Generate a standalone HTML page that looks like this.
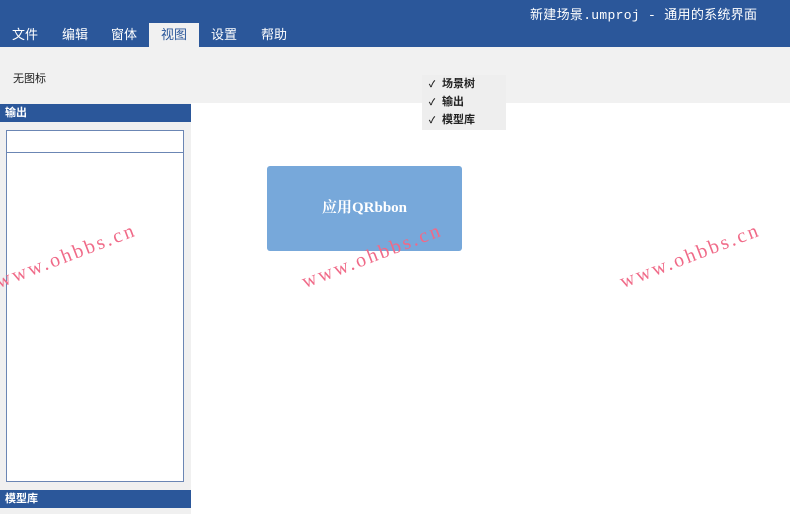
<!DOCTYPE html>
<html><head><meta charset="utf-8"><style>
*{margin:0;padding:0;box-sizing:border-box}
body{width:790px;height:514px;overflow:hidden;background:#fff;font-family:"Liberation Sans","Noto Sans CJK SC",sans-serif;position:relative}
.top{position:absolute;left:0;top:0;width:790px;height:47px;background:#2b579a}
.title{position:absolute;left:530px;top:4px;color:#fff;font-size:13px;letter-spacing:0.3px;font-family:"Liberation Mono","Noto Sans CJK SC",monospace}
.tab{position:absolute;top:23px;height:24px;line-height:24px;color:#fff;font-size:13px;width:50px;text-align:center}
.tab.act{background:#f1f1f1;color:#2b579a}
.ribbon{position:absolute;left:0;top:47px;width:790px;height:56px;background:#f1f1f1}
.left{position:absolute;left:0;top:103px;width:191px;height:411px;background:#f0f0f0}
.hdr{position:absolute;left:0;width:191px;height:18px;background:#2b579a;color:#fff;font-size:11px;font-weight:bold;line-height:18px;padding-left:5px}
.box{position:absolute;background:#fff;border:1px solid #6b86b4}
.menu{position:absolute;left:422px;top:75px;width:84px;height:55px;background:#eeeeee;font-size:11px;color:#222;font-weight:bold}
.menu div{height:18px;line-height:18px}
.menu span{display:inline-block;width:20px;text-align:center;font-size:9px}
.btn{position:absolute;left:267px;top:166px;width:195px;height:85px;background:#77a8da;border-radius:3px;color:#fff;font-size:15px;font-weight:bold;text-align:center;line-height:85px;font-family:"Liberation Serif","Noto Serif CJK SC",serif}
.wm{position:absolute;color:#f06a88;font-size:20px;font-family:"Liberation Serif",serif;transform:rotate(-21deg);letter-spacing:2.5px}
</style></head><body>
<div class="top"></div>
<div class="title">新建场景.umproj - 通用的系统界面</div>
<div class="tab" style="left:0">文件</div>
<div class="tab" style="left:50px">编辑</div>
<div class="tab" style="left:99px">窗体</div>
<div class="tab act" style="left:149px">视图</div>
<div class="tab" style="left:199px">设置</div>
<div class="tab" style="left:249px">帮助</div>
<div class="ribbon"><div style="position:absolute;left:13px;top:23px;font-size:11px;color:#222">无图标</div></div>
<div class="left">
<div class="hdr" style="top:1px">输出</div>
<div class="box" style="left:6px;top:27px;width:178px;height:23px"></div>
<div class="box" style="left:6px;top:49px;width:178px;height:330px"></div>
<div class="hdr" style="top:387px">模型库</div>
</div>
<div class="menu"><div><span>✓</span>场景树</div><div><span>✓</span>输出</div><div><span>✓</span>模型库</div></div>
<div class="btn">应用QRbbon</div>
<div class="wm" style="left:-8px;top:245px">www.ohbbs.cn</div>
<div class="wm" style="left:298px;top:245px">www.ohbbs.cn</div>
<div class="wm" style="left:616px;top:245px">www.ohbbs.cn</div>
</body></html>
